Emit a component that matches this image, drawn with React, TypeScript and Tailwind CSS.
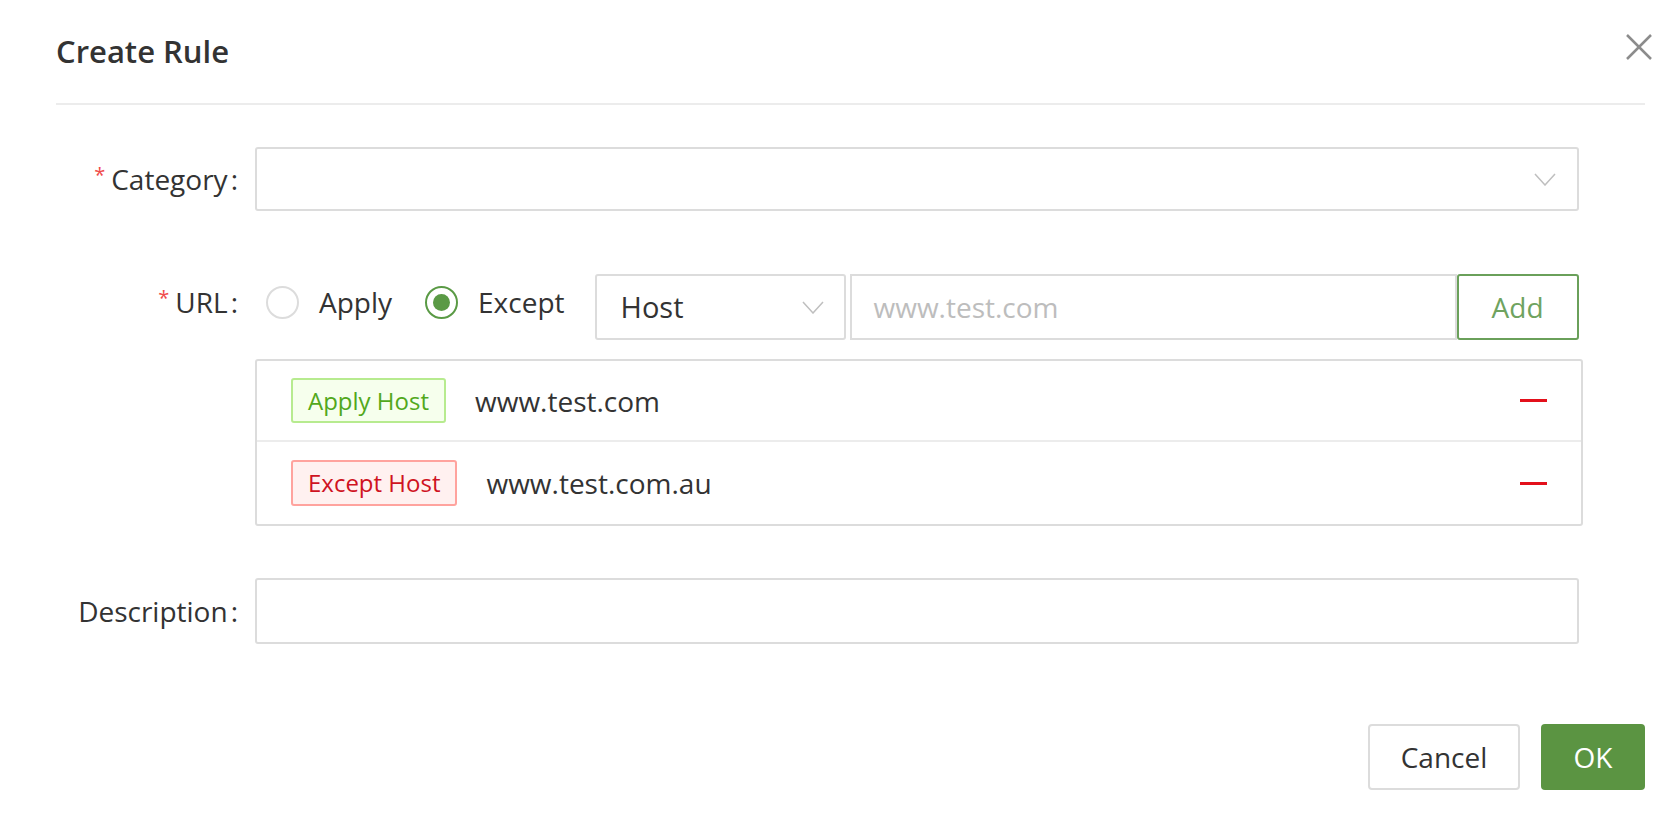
import React from 'react';

function Chevron() {
  return (
    <svg width="22" height="13" viewBox="0 0 22 13" fill="none">
      <polyline points="1,1 11,12 21,1" stroke="#bfbfbf" strokeWidth="1.5" />
    </svg>
  );
}

function Radio({ checked, label }: { checked?: boolean; label: string }) {
  return (
    <label className="flex items-center gap-[20px]">
      <span
        className={
          checked
            ? 'w-[33px] h-[33px] rounded-full border-2 border-[#5a9a45] flex items-center justify-center'
            : 'w-[33px] h-[33px] rounded-full border-2 border-[#dcdcdc]'
        }
      >
        {checked && <span className="w-[17px] h-[17px] rounded-full bg-[#5a9a45]" />}
      </span>
      <span>{label}</span>
    </label>
  );
}

function FieldLabel({ required, text }: { required?: boolean; text: string }) {
  return (
    <div className="w-[238px] shrink-0 flex justify-end items-center">
      {required && <span className="text-[#f04a4a] text-[20px] mr-[6px] mb-[8px] leading-none">*</span>}
      <span>{text}</span>
      <span className="ml-[3px]">:</span>
    </div>
  );
}

export default function App() {
  return (
    <div className="relative w-[1680px] h-[828px] bg-white text-[#333] text-[28px] font-['Open_Sans',sans-serif]">
      {/* Header */}
      <div className="ml-[56px] mr-[35px] h-[105px] flex items-center border-b-2 border-[#ececec]">
        <h2 className="text-[31px] font-semibold text-[#333]">Create Rule</h2>
      </div>
      <button className="absolute top-[33px] right-[27px] w-[28px] h-[28px]">
        <svg width="28" height="28" viewBox="0 0 28 28" fill="none">
          <line x1="2" y1="2" x2="26" y2="26" stroke="#8c8c8c" strokeWidth="2.5" />
          <line x1="26" y1="2" x2="2" y2="26" stroke="#8c8c8c" strokeWidth="2.5" />
        </svg>
      </button>

      {/* Form */}
      <div className="mt-[42px] flex flex-col">
        {/* Category */}
        <div className="flex items-center">
          <FieldLabel required text="Category" />
          <div className="ml-[17px] w-[1324px] h-[64px] border-2 border-[#dcdcdc] rounded-[3px] flex items-center justify-end pr-[21px]">
            <Chevron />
          </div>
        </div>

        {/* URL */}
        <div className="mt-[63px] flex items-start">
          <div className="h-[56px] flex items-center">
            <FieldLabel required text="URL" />
          </div>
          <div className="ml-[17px] w-[1328px] flex flex-col">
            <div className="flex items-start">
              <div className="ml-[11px] h-[56px] flex items-center gap-[33px]">
                <Radio label="Apply" />
                <Radio checked label="Except" />
              </div>
              <div className="ml-[30px] w-[251px] h-[66px] border-2 border-[#dcdcdc] rounded-[3px] flex items-center justify-between pl-[24px] pr-[20px] text-[29px]">
                <span>Host</span>
                <Chevron />
              </div>
              <div className="ml-[4px] w-[607px] h-[66px] border-2 border-[#dcdcdc] flex items-center pl-[22px] text-[#bdbdbd]">
                www.test.com
              </div>
              <button className="w-[122px] h-[66px] border-2 border-[#6aa05a] rounded-[3px] text-[#6fa35f]">
                Add
              </button>
            </div>
            <div className="mt-[19px] w-[1328px] border-2 border-[#dcdcdc] rounded-[3px] flex flex-col">
              <div className="h-[81px] flex items-center border-b-2 border-[#ececec] pl-[34px] pr-[34px]">
                <span className="h-[45px] px-[15px] flex items-center border-2 border-[#b7eb8f] bg-[#f6ffed] text-[#52a81c] text-[24px] rounded-[3px]">
                  Apply Host
                </span>
                <span className="ml-[29px] flex-1">www.test.com</span>
                <span className="w-[27px] h-[3px] bg-[#e3101b]" />
              </div>
              <div className="h-[82px] flex items-center pl-[34px] pr-[34px]">
                <span className="h-[46px] px-[15px] flex items-center border-2 border-[#ffa39e] bg-[#fff1f0] text-[#cf1322] text-[24px] rounded-[3px]">
                  Except Host
                </span>
                <span className="ml-[29px] flex-1">www.test.com.au</span>
                <span className="w-[27px] h-[3px] bg-[#e3101b]" />
              </div>
            </div>
          </div>
        </div>

        {/* Description */}
        <div className="mt-[52px] flex items-center">
          <FieldLabel text="Description" />
          <div className="ml-[17px] w-[1324px] h-[66px] border-2 border-[#dcdcdc] rounded-[3px]" />
        </div>
      </div>

      {/* Footer */}
      <div className="mt-[80px] mr-[35px] flex justify-end gap-[21px]">
        <button className="w-[152px] h-[66px] border-2 border-[#dcdcdc] rounded-[4px] text-[#333]">Cancel</button>
        <button className="w-[104px] h-[66px] rounded-[4px] bg-[#5b9442] text-white">OK</button>
      </div>
    </div>
  );
}
